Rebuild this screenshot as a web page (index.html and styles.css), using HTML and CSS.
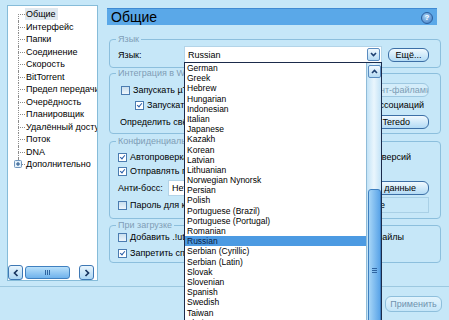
FILE: index.html
```html
<!DOCTYPE html>
<html lang="ru">
<head>
    <meta charset="UTF-8">
    <title>Настройки - Общие</title>
    <link rel="stylesheet" href="styles.css">
</head>
<body>
<div class="window">
    <aside class="tree">
        <ul class="tree-list">
            <li class="first"><span class="selected">Общие</span></li>
            <li>Интерфейс</li>
            <li>Папки</li>
            <li>Соединение</li>
            <li>Скорость</li>
            <li>BitTorrent</li>
            <li>Предел передачи</li>
            <li>Очерёдность</li>
            <li>Планировщик</li>
            <li>Удалённый доступ</li>
            <li>Поток</li>
            <li>DNA</li>
            <li class="branch">
                <svg class="plus" width="8" height="8" viewBox="0 0 8 8"><rect x="0.5" y="0.5" width="7" height="7" rx="1" fill="#e4f1fa" stroke="#6f95bd"/><path d="M2 4h4M4 2v4" stroke="#1f4f86" stroke-width="1"/></svg>
                Дополнительно
            </li>
        </ul>
        <div class="hscroll">
            <span class="sbtn"><svg width="6" height="8" viewBox="0 0 6 8"><path d="M4.5 1L1.5 4l3 3" fill="none" stroke="#17345f" stroke-width="1.7"/></svg></span>
            <span class="hthumb"><span class="grip"></span></span>
            <span class="sbtn right"><svg width="6" height="8" viewBox="0 0 6 8"><path d="M1.5 1l3 3-3 3" fill="none" stroke="#17345f" stroke-width="1.7"/></svg></span>
        </div>
    </aside>

    <main class="main">
        <div class="title">
            <span>Общие</span>
            <span class="help">?</span>
        </div>

        <div class="group g-lang">
            <span class="legend">Язык</span>
            <div class="row row-lang">
                <span class="field-label">Язык:</span>
                <div class="combo">
                    <span>Russian</span>
                    <span class="arrow"><svg width="7" height="5" viewBox="0 0 7 5"><path d="M1 1l2.5 2.5L6 1" fill="none" stroke="#1d3f70" stroke-width="1.6"/></svg></span>
                </div>
                <button class="btn more">Ещё...</button>
            </div>
        </div>

        <div class="group g-win">
            <span class="legend">Интеграция в Windows</span>
            <div class="row r1">
                <label class="opt ind1"><span class="cb"></span>Запускать µTorrent вместе с Windows</label>
                <button class="btn off wide"><span>Связать с торрент-файлами</span></button>
            </div>
            <div class="row r2">
                <label class="opt ind2"><span class="cb on"></span>Запускать свёрнутым</label>
                <label class="opt side" style="margin-right: 5px"><span class="cb"></span>Проверка ассоциаций</label>
            </div>
            <div class="row r3">
                <span class="opt ind3">Определить свёрнутым при старте</span>
                <button class="btn side-btn" style="padding-right: 18px">Установить Teredo</button>
            </div>
        </div>

        <div class="group g-priv">
            <span class="legend">Конфиденциальность</span>
            <div class="row p1">
                <label class="opt"><span class="cb on"></span>Автопроверка обновлений</label>
                <label class="opt side" style="margin-right: 18px"><span class="cb"></span>Обновлять до бета-версий</label>
            </div>
            <div class="row">
                <label class="opt"><span class="cb on"></span>Отправлять подробную информацию</label>
            </div>
            <div class="row p3">
                <span class="field-label boss">Анти-босс:</span>
                <div class="combo small"><span>Нет</span></div>
                <button class="btn side-btn" style="padding-right: 12px">Очистить данные</button>
            </div>
            <div class="row p4">
                <label class="opt"><span class="cb"></span>Пароль для клавиши</label>
                <span class="textbox"><span>Введите пароль ниже</span></span>
            </div>
        </div>

        <div class="group g-load">
            <span class="legend">При загрузке</span>
            <div class="row l1">
                <label class="opt"><span class="cb"></span>Добавить .!ut к незавершённым</label>
                <label class="opt side" style="margin-right: 25px"><span class="cb"></span>Удалять торрент-файлы</label>
            </div>
            <div class="row">
                <label class="opt"><span class="cb on"></span>Запретить спящий режим</label>
            </div>
        </div>
    </main>
</div>

<div class="footer">
    <button class="btn apply">Применить</button>
</div>

<div class="dropdown">
    <ul class="options">
        <li>German</li>
        <li>Greek</li>
        <li>Hebrew</li>
        <li>Hungarian</li>
        <li>Indonesian</li>
        <li>Italian</li>
        <li>Japanese</li>
        <li>Kazakh</li>
        <li>Korean</li>
        <li>Latvian</li>
        <li>Lithuanian</li>
        <li>Norwegian Nynorsk</li>
        <li>Persian</li>
        <li>Polish</li>
        <li>Portuguese (Brazil)</li>
        <li>Portuguese (Portugal)</li>
        <li>Romanian</li>
        <li class="current">Russian</li>
        <li>Serbian (Cyrillic)</li>
        <li>Serbian (Latin)</li>
        <li>Slovak</li>
        <li>Slovenian</li>
        <li>Spanish</li>
        <li>Swedish</li>
        <li>Taiwan</li>
        <li>Thai</li>
    </ul>
    <div class="vscroll">
        <span class="arrow up"><svg width="7" height="5" viewBox="0 0 7 5"><path d="M1 4l2.5-2.5L6 4" fill="none" stroke="#1d3f70" stroke-width="1.6"/></svg></span>
        <span class="vthumb"><span class="vgrip"></span></span>
    </div>
</div>
</body>
</html>
```

FILE: styles.css
```css
body {
    margin: 0;
    width: 449px;
    height: 320px;
    overflow: hidden;
    position: relative;
    background-color: #c6e7f8;
    font-family: "Liberation Sans", Arial, sans-serif;
    font-size: 9px;
    color: #000;
}
.window {
    display: flex;
    height: 281px;
    padding: 5px 0 0 7px;
    box-sizing: border-box;
}

/* left tree */
.tree {
    width: 91px;
    height: 276px;
    box-sizing: border-box;
    border: 1px solid #86bcd9;
    background-color: #fff;
    display: flex;
    flex-direction: column;
    overflow: hidden;
}
.tree-list {
    list-style: none;
    margin: 0;
    padding: 2px 0 0 0;
}
.tree-list li {
    position: relative;
    height: 12.5px;
    line-height: 12.5px;
    padding-left: 18px;
    white-space: nowrap;
}
.tree-list li::before {
    content: "";
    position: absolute;
    left: 10px;
    top: 6px;
    width: 7px;
    border-top: 1px dotted #8c8c8c;
}
.tree-list li::after {
    content: "";
    position: absolute;
    left: 10px;
    top: 0;
    bottom: 0;
    border-left: 1px dotted #8c8c8c;
}
.tree-list li.first::after {
    top: 6px;
}
.tree-list li.branch::after {
    bottom: 7px;
}
.tree-list .selected {
    background-color: #dfe8ef;
    margin-left: -1px;
    padding: 1px 2px 1px 1px;
}
.plus {
    position: absolute;
    left: 6px;
    top: 2px;
    z-index: 1;
}
.hscroll {
    margin-top: auto;
    display: flex;
    align-items: flex-end;
    height: 16px;
    padding-right: 3px;
}
.sbtn {
    width: 15px;
    height: 15px;
    box-sizing: border-box;
    border: 1px solid #3f78b4;
    border-radius: 3px;
    background: linear-gradient(#eaf6fd, #acd6f4);
    display: flex;
    align-items: center;
    justify-content: center;
}
.sbtn.right {
    margin-left: auto;
}
.hthumb {
    margin: 0 0 1px 2px;
    width: 45px;
    height: 13px;
    box-sizing: border-box;
    border: 1px solid #3f80c0;
    border-radius: 3px;
    background: linear-gradient(#b9e0fa, #6fb2ec);
    display: flex;
    align-items: center;
    justify-content: center;
}
.grip {
    width: 5px;
    height: 5px;
    background: repeating-linear-gradient(90deg, #2f64a0 0 1px, transparent 1px 2px);
}

/* right side */
.main {
    margin-left: 9px;
    width: 334px;
    display: flex;
    flex-direction: column;
}
.title {
    margin: 3px 4px 0 0;
    height: 17px;
    box-sizing: border-box;
    background-color: #5aa8e8;
    border-top: 1px solid #3f8ad2;
    display: flex;
    align-items: center;
    justify-content: space-between;
    padding: 0 4px 0 4px;
    font-size: 14px;
}
.help {
    width: 12px;
    height: 12px;
    box-sizing: border-box;
    border-radius: 50%;
    border: 1px solid #2b5f9e;
    background: radial-gradient(circle at 40% 35%, #a6d2f6, #3a78c2);
    color: #fff;
    font-size: 8px;
    font-weight: bold;
    line-height: 10px;
    text-align: center;
    margin-top: 1px;
}
.group {
    position: relative;
    margin-left: 2px;
    border: 1px solid #8cbfdd;
    border-radius: 4px;
    box-sizing: border-box;
    padding: 0 11px 0 8px;
}
.legend {
    position: absolute;
    top: -6px;
    left: 6px;
    padding: 0 2px;
    line-height: 11px;
    color: #7f9db6;
    background-color: #c6e7f8;
}
.g-lang { margin-top: 14px; height: 29px; padding-top: 6px; }
.g-win { margin-top: 5px; height: 61px; padding-top: 9px; }
.g-priv { margin-top: 7px; height: 78px; padding-top: 8px; }
.g-load { margin-top: 6px; height: 38px; padding-top: 4px; }

.row {
    display: flex;
    align-items: center;
    height: 14px;
    white-space: nowrap;
}
.row-lang { height: 17px; }
.r2 { margin-top: 1px; }
.r3 { margin-top: 3px; }
.p3 { margin-top: 2px; height: 16px; }
.p4 { margin-top: 1px; height: 16px; }
.l1 + .row { margin-top: 2px; }

.field-label {
    width: 66px;
    flex-shrink: 0;
}
.field-label.boss {
    width: 50px;
}
.opt {
    display: flex;
    align-items: center;
    flex: 1;
    min-width: 0;
    overflow: hidden;
}
.opt.side {
    flex: none;
}
.ind1 { margin-left: 3px; }
.ind2 { margin-left: 17px; }
.ind3 { margin-left: 2px; }
.cb {
    position: relative;
    width: 9px;
    height: 9px;
    box-sizing: border-box;
    border: 1px solid #4b7cb0;
    background: linear-gradient(#c9dfee, #eef6fc);
    margin-right: 3px;
    flex-shrink: 0;
}
.cb.on {
    background: #fff;
}
.cb.on::after {
    content: "";
    position: absolute;
    left: 2px;
    top: 0;
    width: 2px;
    height: 4px;
    border: solid #2a5ea8;
    border-width: 0 1.5px 1.5px 0;
    transform: rotate(40deg);
}
.combo {
    width: 198px;
    height: 17px;
    box-sizing: border-box;
    border: 1px solid #b3d4e8;
    background-color: #fff;
    display: flex;
    align-items: center;
    justify-content: space-between;
    padding-left: 3px;
    flex-shrink: 0;
}
.combo.small {
    width: 120px;
    height: 16px;
    margin-right: auto;
}
.arrow {
    width: 13px;
    height: 13px;
    box-sizing: border-box;
    margin-right: 1px;
    border: 1px solid #5a8cc0;
    border-radius: 2px;
    background: linear-gradient(#f2f9fe, #b6dbf4);
    display: flex;
    align-items: center;
    justify-content: center;
}
.btn {
    height: 14px;
    box-sizing: border-box;
    border: 1px solid #3c6fa6;
    border-radius: 6px;
    background: linear-gradient(#f0f9fe, #b3dbf5);
    font: inherit;
    color: #000;
    padding: 0 5px;
    display: flex;
    align-items: center;
    justify-content: center;
    flex-shrink: 0;
    white-space: nowrap;
}
.more {
    width: 41px;
    margin-left: 6px;
}
.btn.off {
    border-color: #9ec8e1;
    background: #d4edfa;
    color: #7d9db6;
}
.wide {
    width: 110px;
    margin-left: auto;
    justify-content: flex-end;
    overflow: hidden;
    padding: 0;
}
.wide span {
    margin-right: -3px;
}
.side-btn {
    width: 100px;
    margin-left: auto;
    justify-content: flex-end;
    overflow: hidden;
}
.textbox {
    width: 100px;
    height: 16px;
    box-sizing: border-box;
    border: 1px solid #a9d0e6;
    padding-right: 43px;
    display: flex;
    align-items: center;
    justify-content: flex-end;
    overflow: hidden;
    flex-shrink: 0;
}

.footer {
    margin-top: 5px;
    border-top: 1px solid #9cc8e0;
    display: flex;
    justify-content: flex-end;
    padding: 9px 7px 0 0;
}
.btn.apply {
    width: 57px;
    height: 16px;
    border-color: #8ebfdc;
    background: linear-gradient(#e2f4fd, #c4e5f8);
    color: #6f92ae;
}

/* open language list */
.dropdown {
    position: absolute;
    left: 184px;
    top: 62px;
    width: 198px;
    height: 270px;
    box-sizing: border-box;
    border: 1px solid #1b2b4b;
    background-color: #fff;
    display: flex;
}
.options {
    list-style: none;
    margin: 0;
    padding: 0;
    flex: 1;
    font-size: 8.5px;
}
.options li {
    height: 10.2px;
    line-height: 10.2px;
    padding-left: 2px;
    white-space: nowrap;
}
.options li.current {
    background-color: #4c9ae2;
    color: #0b1c44;
}
.vscroll {
    width: 15px;
    border-left: 1px solid #8fbcd9;
    background: linear-gradient(90deg, #c3e3f7, #eaf6fd 50%, #c3e3f7);
    display: flex;
    flex-direction: column;
    align-items: center;
    box-sizing: border-box;
}
.vscroll .up {
    margin: 2px 0 0 0;
}
.vthumb {
    margin-top: 111px;
    width: 13px;
    flex: 1;
    box-sizing: border-box;
    border: 1px solid #3d7fc0;
    border-radius: 3px;
    background: linear-gradient(90deg, #a6d5f7, #5aa4e8);
    display: flex;
    justify-content: center;
}
.vgrip {
    margin-top: 78px;
    width: 5px;
    height: 5px;
    background: repeating-linear-gradient(180deg, #2f64a0 0 1px, transparent 1px 2px);
}
```
